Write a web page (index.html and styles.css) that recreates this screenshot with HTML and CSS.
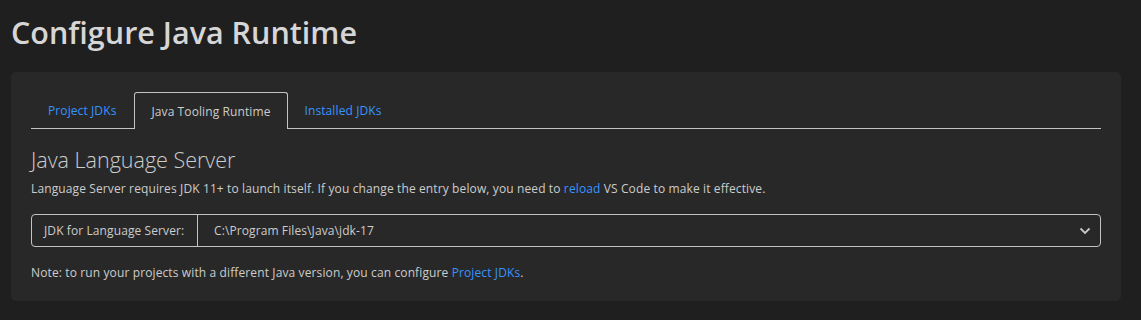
FILE: index.html
```html
<!DOCTYPE html>
<html lang="en">
<head>
<meta charset="utf-8">
<title>Configure Java Runtime</title>
<link rel="stylesheet" href="styles.css">
</head>
<body>
<div class="page">
  <h1 class="title">Configure Java Runtime</h1>
  <div class="card">
    <div class="tabs">
      <a class="tab">Project JDKs</a>
      <a class="tab active">Java Tooling Runtime</a>
      <a class="tab">Installed JDKs</a>
      <div class="tab-fill"></div>
    </div>
    <h2 class="section">Java Language Server</h2>
    <p class="desc">Language Server requires JDK 11+ to launch itself. If you change the entry below, you need to <a class="link">reload</a> VS Code to make it effective.</p>
    <div class="field">
      <div class="field-label">JDK for Language Server:</div>
      <div class="field-select">
        <span class="value">C:\Program Files\Java\jdk-17</span>
        <svg class="chev" width="12" height="8" viewBox="0 0 12 8"><path d="M1.5 1.5 L6 6 L10.5 1.5" fill="none" stroke="#c8c8c8" stroke-width="1.8"/></svg>
      </div>
    </div>
    <p class="note">Note: to run your projects with a different Java version, you can configure <a class="link">Project JDKs</a>.</p>
  </div>
</div>
</body>
</html>
```
FILE: styles.css
```css
html, body {
  margin: 0;
  padding: 0;
  background: #1f1f1f;
}
body {
  font-family: "Open Sans", "Noto Sans", sans-serif;
  color: #cccccc;
}
.page {
  padding: 0 20px 0 11px;
}
.title {
  margin: 0;
  padding-top: 11px;
  height: 72px;
  box-sizing: border-box;
  font-size: 30.5px;
  font-weight: 600;
  color: #d6d6d6;
  line-height: 42px;
}
.card {
  background: #282828;
  border-radius: 5px;
  padding: 20px 20px 22px 20px;
  height: 229px;
  box-sizing: border-box;
}
.tabs {
  display: flex;
  height: 37px;
  box-sizing: border-box;
}
.tab {
  display: flex;
  align-items: center;
  padding: 0 18px 0 17px;
  font-size: 12px;
  color: #3794ff;
  border-bottom: 1px solid #c3c3c3;
  letter-spacing: 0.1px;
  white-space: nowrap;
}
.tab.active {
  color: #cccccc;
  border: 1px solid #c3c3c3;
  border-bottom: none;
  border-radius: 3px 3px 0 0;
  padding: 0 16px;
}
.tab-fill {
  flex: 1;
  border-bottom: 1px solid #c3c3c3;
}
.section {
  margin: 17px 0 0 0;
  font-size: 21.5px;
  font-weight: 300;
  color: #cccccc;
  line-height: 28px;
}
.desc {
  margin: 6px 0 0 0;
  font-size: 12px;
  line-height: 17px;
  letter-spacing: 0.12px;
}
.link {
  color: #3794ff;
}
.field {
  margin-top: 17px;
  display: flex;
  height: 33px;
  box-sizing: border-box;
  border: 1px solid #c3c3c3;
  border-radius: 4px;
}
.field-label {
  display: flex;
  align-items: center;
  flex: 0 0 166px;
  padding: 0 0 0 12px;
  box-sizing: border-box;
  border-right: 1px solid #c3c3c3;
  font-size: 12px;
  letter-spacing: 0.1px;
  white-space: nowrap;
}
.field-select {
  flex: 1;
  display: flex;
  align-items: center;
  justify-content: space-between;
  padding: 0 9px 0 16px;
  font-size: 12px;
  letter-spacing: 0.1px;
}
.note {
  margin: 17px 0 0 0;
  font-size: 12px;
  line-height: 17px;
  letter-spacing: 0.12px;
}
```
